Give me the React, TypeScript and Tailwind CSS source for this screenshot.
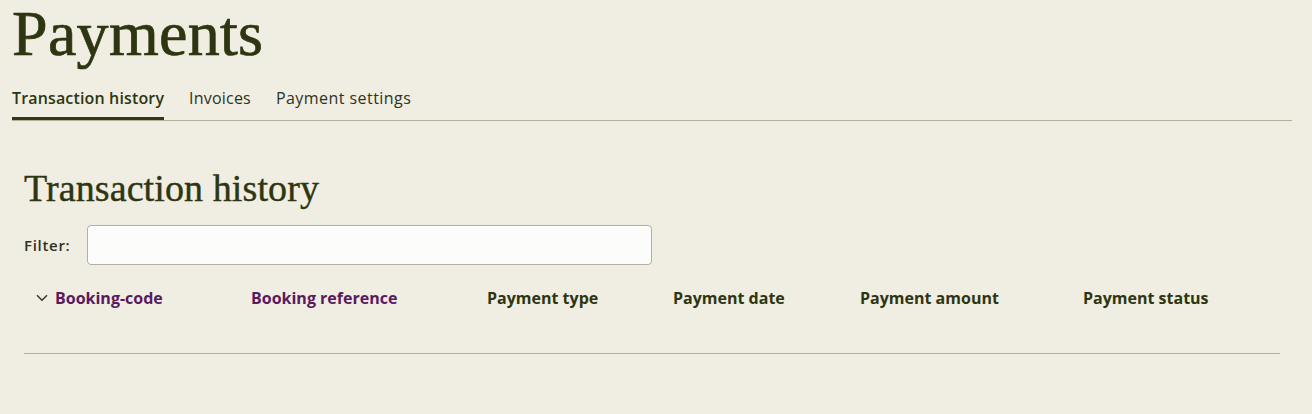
import React from "react";

const sans = "font-['Open_Sans',sans-serif]";
const serif = "font-['Liberation_Serif',serif]";

function Chevron() {
  return (
    <svg width="12" height="8" viewBox="0 0 12 8" fill="none" className="shrink-0">
      <path d="M1 1.2 L6 6.2 L11 1.2" stroke="#2f3320" strokeWidth="1.4" />
    </svg>
  );
}

export default function App() {
  const cols = [
    { label: "Booking-code", purple: true, chevron: true },
    { label: "Booking reference", purple: true },
    { label: "Payment type" },
    { label: "Payment date" },
    { label: "Payment amount" },
    { label: "Payment status" },
  ];
  return (
    <div className={`min-h-[414px] bg-[#f0ede3] pl-3 pr-5 ${sans} text-[#2f3320]`}>
      <h1
        className={`${serif} text-[64px] leading-[68px] tracking-[0.3px] text-[#2d3610] [-webkit-text-stroke:0.7px_#2d3610]`}
      >
        Payments
      </h1>
      <nav className="mt-[18px] flex gap-[25px] border-b border-[#b1ad9f]">
        <a className="border-b-[3px] border-[#33380f] pb-[7px] text-[16px] font-semibold leading-6 tracking-[0.15px] text-[#2d3610]">
          Transaction history
        </a>
        <a className="border-b-[3px] border-transparent pb-[7px] text-[16px] leading-6 tracking-[0.2px]">Invoices</a>
        <a className="border-b-[3px] border-transparent pb-[7px] text-[16px] leading-6 tracking-[0.45px]">
          Payment settings
        </a>
      </nav>
      <section className="mr-3 mt-[45px] pl-3">
        <h2
          className={`${serif} text-[38px] leading-[44px] tracking-[0.1px] text-[#2d3610] [-webkit-text-stroke:0.4px_#2d3610]`}
        >
          Transaction history
        </h2>
        <div className="mt-[15px] flex items-center gap-4">
          <label className="text-[15px] font-semibold tracking-[0.7px] text-[#2f3320]">Filter:</label>
          <input
            className="ml-px h-10 w-[565px] rounded-[4px] border border-[#b3afa4] bg-[#fcfcfa] px-2 outline-none"
            type="text"
          />
        </div>
        <div className="mt-[21px] grid grid-cols-[215px_236px_186px_187px_223px_1fr] border-b border-[#b1ad9f] pb-[43px]">
          {cols.map((c) => (
            <div key={c.label} className="flex items-center gap-[7px] px-3 leading-6">
              {c.chevron && <Chevron />}
              <span className={`text-[16px] font-bold ${c.purple ? "text-[#5a1a5e]" : "text-[#2d3610]"}`}>
                {c.label}
              </span>
            </div>
          ))}
        </div>
      </section>
    </div>
  );
}
